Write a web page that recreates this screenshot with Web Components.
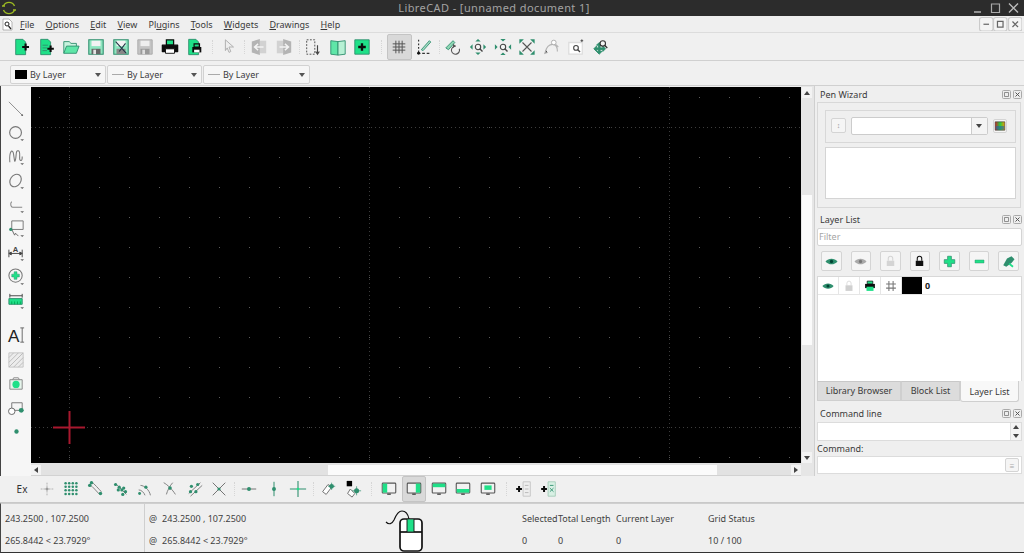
<!DOCTYPE html>
<html lang="en"><head><meta charset="utf-8"><title>LibreCAD</title>
<style>html,body{margin:0;height:100%;background:#efefef;overflow:hidden}</style></head>
<body>
<lc-app></lc-app>
<script>
const G='#1fe088',T='#2f8f6e',K='#0c0c0c',M='#8b8b8b',L='#c8c8c8';
const plus=(x,y,r=3.5,w=2.4,c=K)=>`<path d="M${x-r} ${y}h${2*r}M${x} ${y-r}v${2*r}" stroke="${c}" stroke-width="${w}" fill="none"/>`;
const arrow=`<path d="M14 17h4l-2 2z" fill="#666"/>`;
const dot=(x,y,r=1.8,c=T)=>`<circle cx="${x}" cy="${y}" r="${r}" fill="${c}"/>`;
const mon=(s)=>`<rect x="2.5" y="3.5" width="15" height="11" rx="1" fill="#f2f2f2" stroke="#555" stroke-width="1.2"/>${s}<path d="M8 15h4v1.5H8z" fill="#444"/>`;
const I={
 new:`<path d="M3 1.5h8l3 3v14H3z" fill="${G}" stroke="${T}"/>`+plus(14,10,3.8,2.4),
 tmpl:`<path d="M3 1.5h8l3 3v14H3z" fill="${G}" stroke="${T}"/><path d="M5 8h6M5 11h5M5 14h5" stroke="${T}"/>`+plus(14,12,3.6,2.3),
 open:`<path d="M2 17V4h6l2 2h6v3" fill="#c8f3de" stroke="${T}"/><path d="M2 17l3-8h14l-3 8z" fill="#5fe6a8" stroke="${T}"/>`,
 save:`<path d="M2 2h16v16H2z" fill="#8fe6c0" stroke="${T}" stroke-width="1.2"/><path d="M5 3h10v6H5z" fill="#f3f3f3"/><path d="M5 12h10v6H5z" fill="#666"/><path d="M7 13h3v5H7z" fill="#e4e4e4"/>`,
 saveas:`<path d="M2 2h16v16H2z" fill="#8fe6c0" stroke="${T}" stroke-width="1.2"/><path d="M5 3h10v6H5z" fill="#f3f3f3"/><path d="M5 12h10v6H5z" fill="#888"/><path d="M4 4l12 13M8 15l7-9" stroke="#234" stroke-width="1.2"/>`,
 savedis:`<path d="M2 2h16v16H2z" fill="#c4c4c4" stroke="#a8a8a8"/><path d="M5 3h10v6H5z" fill="#eee"/><path d="M5 12h10v6H5z" fill="#999"/><path d="M7 13h3v5H7z" fill="#ddd"/>`,
 print:`<path d="M6 2h8v6H6z" fill="${G}" stroke="${K}" stroke-width="1.4"/><path d="M1.5 8h17v7h-17z" fill="${K}" stroke="${K}" stroke-width="1.4" stroke-linejoin="round"/><path d="M5 12h10v5H5z" fill="#fff" stroke="${K}"/>`,
 prev:`<path d="M3 1.5h8l3 3v14H3z" fill="${G}" stroke="${T}"/><path d="M7 10h10v6H7z" fill="${K}"/><path d="M9 6.5h6V10H9z" fill="none" stroke="${K}" stroke-width="1.3"/><path d="M9 13h6v3H9z" fill="#fff"/>`,
 ptr:`<path d="M6 2l9 8h-5l2 5-2 1-2-5-2 3z" fill="#eee" stroke="#aaa"/>`,
 undo:`<path d="M2 4l9-3v18l-9-3z" fill="#b4b4b4"/><path d="M11 3h7v14h-7z" fill="#d2d2d2"/><path d="M15 10H5M9 6.5L5 10l4 3.5" stroke="#f4f4f4" stroke-width="1.6" fill="none"/>`,
 redo:`<path d="M2 3h7v14H2z" fill="#d2d2d2"/><path d="M9 1l9 3v12l-9 3z" fill="#b4b4b4"/><path d="M5 10h10M11 6.5l4 3.5-4 3.5" stroke="#f4f4f4" stroke-width="1.6" fill="none"/>`,
 sel:`<path d="M3 2h9v16H3z" fill="none" stroke="#444" stroke-dasharray="2 1.6"/><path d="M15 8v9M13 15l2 3 2-3" stroke="#444" stroke-width="1.3" fill="none"/>`,
 book:`<path d="M2 3l8 1v15l-8-1z" fill="#5fe6a8" stroke="${T}"/><path d="M10 4l8-1v15l-8 1z" fill="#b6f0d4" stroke="${T}"/>`,
 addblk:`<path d="M2 2h16v16H2z" fill="${G}" stroke="${T}"/>`+plus(10,10,4.2,2.6),
 grid:`<path d="M6.5 3v14M10 3v14M13.5 3v14M3 6.5h14M3 10h14M3 13.5h14" stroke="#555" stroke-width="1.1" fill="none"/>`,
 draft:`<path d="M3 17h15" stroke="#333" stroke-dasharray="3 2" stroke-width="1.3"/><path d="M4 2v15" stroke="#333" stroke-dasharray="2 2" stroke-width="1.3"/><path d="M7 13L16 3l1.5 1.5L9 14z" fill="#a6dcc4" stroke="${T}"/>${dot(4,17,1.6,'#111')}`,
 zredraw:`<path d="M2 11l8-8 2 2-7 8z" fill="#8fd6b4" stroke="${T}"/><path d="M17 12a4.5 4.5 0 1 1-4-3" fill="none" stroke="#555" stroke-width="1.2"/><path d="M10 6.5l3 2.5-3 2z" fill="#555"/>`,
 zin:`<path d="M10 1l3 3H7zM10 19l-3-3h6zM1 10l3-3v6zM19 10l-3 3V7z" fill="${T}"/><circle cx="10" cy="10" r="3" fill="#f4f4f4" stroke="#444" stroke-width="1.2"/><path d="M12 12l3 3" stroke="#444" stroke-width="1.5"/>`,
 zout:`<path d="M10 4L7 1h6zM10 16l-3 3h6zM4 10L1 7v6zM16 10l3-3v6z" fill="${T}"/><circle cx="10" cy="10" r="3" fill="#f4f4f4" stroke="#444" stroke-width="1.2"/><path d="M12 12l3 3" stroke="#444" stroke-width="1.5"/>`,
 zauto:`<path d="M5 5l10 10M15 5L5 15" stroke="#555" stroke-width="1.2"/><path d="M1.5 1.5h5l-5 5zM18.5 1.5v5l-5-5zM1.5 18.5v-5l5 5zM18.5 18.5h-5l5-5z" fill="${T}"/>`,
 zprev:`<path d="M3 16c0-6 4-9 8-9s5 4 5 8" fill="none" stroke="#b4b4b4" stroke-width="1.3"/><circle cx="12" cy="5" r="2.6" fill="#fff" stroke="#aaa"/><path d="M14 7l3 3M3 14l-1 3 3-1" stroke="#b4b4b4" stroke-width="1.2"/>`,
 zwin:`<path d="M2 5h15v13H2z" fill="#fff" stroke="#ddd" stroke-width="1.4"/><circle cx="10" cy="11" r="2.6" fill="none" stroke="#444" stroke-width="1.2"/><path d="M12 13l2.5 2.5" stroke="#444" stroke-width="1.5"/><path d="M15 3h3M16.5 1.5v3" stroke="#444"/>`,
 zpan:`<path d="M8 5l3 3H9v3h3V9l3 3-3 3v-2H9v2h2l-3 3-3-3h2v-2H5v2l-3-3 3-3v2h2V8H5z" fill="${T}" stroke="${T}"/><circle cx="12" cy="6" r="3" fill="#f4f4f4" stroke="#333" stroke-width="1.2"/><path d="M14 8l3 3" stroke="#333" stroke-width="1.5"/>`,
 line:`<path d="M2 3l14 14" stroke="#8a8a8a" stroke-width="1"/><circle cx="16" cy="17" r="1" fill="#666"/>`,
 circle:`<circle cx="9" cy="10" r="6.2" fill="none" stroke="#777" stroke-width="1.2"/>`+arrow,
 spline:`<path d="M3 16C2 4 6 1 7 8s1 9 2 5 0-10 3-9 0 9 2 10 2-2 2-4" fill="none" stroke="#777" stroke-width="1.1"/>`+arrow,
 ellipse:`<ellipse cx="9" cy="10" rx="5.5" ry="7" transform="rotate(35 9 10)" fill="none" stroke="#777" stroke-width="1.2"/>`+arrow,
 poly:`<path d="M5 7c-2 2-1 6 1 6h10" fill="none" stroke="#888" stroke-width="1.1"/>`+arrow,
 select:`<path d="M5 2h12v9H5z" fill="#f8f8f8" stroke="#777"/><path d="M5 11l3 6 1-2 3 3" stroke="#666" fill="none"/>${dot(4,11,1.7)}`+arrow,
 dim:`<path d="M2 7v8M16 7v8M2 11h14M2 11l2.5-1.5v3zM16 11l-2.5-1.5v3z" stroke="#444" fill="#444"/><text x="9" y="9" font-family="Liberation Sans" font-size="8" font-weight="700" text-anchor="middle" fill="#444">A</text>`+arrow,
 modify:`<circle cx="9" cy="9" r="7" fill="none" stroke="#777" stroke-width="1.1"/><path d="M7.500 5h3v2.500H13v3h-2.500V13h-3v-2.500H5v-3h2.500z" fill="${G}" stroke="${T}" stroke-width=".5"/>`+arrow,
 info:`<path d="M3 3v4M16 3v4M3 5h13" stroke="#444"/><path d="M2 8h14v6H2z" fill="${G}" stroke="${T}"/><path d="M5 11v3M8 11v3M11 11v3M14 11v3" stroke="#0a5"/>`+arrow,
 text:`<text x="1" y="17" font-family="Liberation Sans" font-size="18" fill="#222">A</text><path d="M16 2v15M14 2h4M14 17h4" stroke="#666"/>`,
 hatch:`<path d="M2 3h15v15H2z" fill="#ececec" stroke="#c4c4c4"/><path d="M2 8l5-5M2 13l10-10M2 18L17 3M7 18L17 8M12 18l5-5" stroke="#bbb"/>`,
 image:`<path d="M3 6h13v10H3z" fill="#e6f5ec" stroke="#888"/><circle cx="9.5" cy="11" r="3.8" fill="${G}"/><path d="M6 6l1-2h5l1 2" fill="none" stroke="#888"/>`,
 insert:`<path d="M5 5h11v8H5z" fill="none" stroke="#777"/><circle cx="5" cy="14" r="3.4" fill="#fff" stroke="#666"/>${dot(15,13,2.6)}`,
 point:dot(10,10,2.3),
 ex:'',
 sfree:`<path d="M10 3v14M3 10h14" stroke="#aaa" stroke-dasharray="2 1"/><path d="M8 10h4M10 8v4" stroke="#888"/>`,
 sgrid:[4,8,12,16].map(x=>[3,7,11,15].map(y=>dot(x,y+.5,1.4)).join('')).join(''),
 send:`<path d="M5 2c3 2 8 8 11 11M3 5c3 2 8 8 11 11" stroke="#777" fill="none"/>${dot(5,3,1.9)}${dot(15,15,1.9)}${dot(3,6,1.9)}`,
 sonent:`<path d="M4 4l12 12" stroke="#777"/>${dot(4,5,1.8)}${dot(8,8,1.8)}${dot(11,11,1.8)}${dot(7,11,1.8)}${dot(13,9,1.8)}${dot(15,13,1.8)}${dot(12,16,1.8)}`,
 scenter:`<path d="M5 6c4 0 10 5 11 11M3 11c3 0 6 3 7 6" stroke="#777" fill="none"/>${dot(11,8,1.8)}${dot(4,15,1.6)}`,
 smid:`<path d="M3 3c4 2 10 8 13 13M13 3C10 6 7 12 6 16" stroke="#777" fill="none"/>${dot(10,9,2)}`,
 sdist:`<path d="M3 15L16 3M5 18L18 6" stroke="#777"/>${dot(6,7,1.8)}${dot(13,5,1.8)}${dot(5,13,1.8)}${dot(11,13,1.8)}`,
 sint:`<path d="M3 3l14 14M17 3L3 17" stroke="#666"/>${dot(10,10,1.8)}`,
 rfree:`<path d="M2 10h16" stroke="#666"/>${dot(10,10,2.2)}`,
 rvert:`<path d="M10 2v16" stroke="${T}" stroke-width="1.1"/>${dot(10,10,2.2)}`,
 rortho:`<path d="M10 1v18M1 10h18" stroke="${T}" stroke-width="1.2"/>${dot(10,10,1.5,G)}`,
 rel:`<path d="M3 15l6-8 4 3-6 8z" fill="#fff" stroke="#666" transform="translate(1,-2)"/>${dot(14,7,2.6)}<path d="M14 3v8M10 7h8" stroke="${T}" stroke-width=".8"/>`,
 lock:`<path d="M3 1h6v6H3z" fill="#000"/><path d="M7 10l5 5-3 4-5-4z" fill="#fff" stroke="#666"/>${dot(14,12,2.8)}<path d="M14 7v10M9 12h10" stroke="${T}" stroke-width=".8"/>`,
 m1:mon(`<path d="M3 4h5v10H3z" fill="${G}"/>`),
 m2:mon(`<path d="M12 4h5v10h-5z" fill="${G}"/>`),
 m3:mon(`<path d="M3 4h14v4H3z" fill="${G}"/>`),
 m4:mon(`<path d="M3 10h14v4H3z" fill="${G}"/>`),
 m5:mon(`<path d="M6 6h8v5H6z" fill="${G}"/>`),
 ble:plus(4.5,10,3.2,2.2)+`<path d="M9 2h8v16H9z" fill="#eee" stroke="#c4c4c4"/><path d="M11 6h4M11 10h4M11 14h4" stroke="#b4b4b4"/>`,
 blr:plus(4.5,10,3.2,2.2)+`<path d="M9 2h8v16H9z" fill="#d8f0e4" stroke="#a4ccb8"/><path d="M11 6h4M11 9l4 4M15 9l-4 4" stroke="${T}"/>`,
 eye:`<path d="M2 10c4-5 12-5 16 0-4 5-12 5-16 0z" fill="${T}"/><circle cx="10" cy="10" r="2.2" fill="#043"/>`,
 eyeg:`<path d="M2 10c4-5 12-5 16 0-4 5-12 5-16 0z" fill="#aaa"/><circle cx="10" cy="10" r="2.2" fill="#777"/>`,
 lockg:`<path d="M7 9V6a3 3 0 0 1 6 0v3" fill="none" stroke="#d4d4d4" stroke-width="1.4"/><path d="M5 9h10v7H5z" fill="#d4d4d4"/>`,
 lockk:`<path d="M7 9V6a3 3 0 0 1 6 0v3" fill="none" stroke="#111" stroke-width="1.4"/><path d="M5 9h10v7H5z" fill="#111"/>`,
 lplus:`<path d="M7.5 3h5v4.5H17v5h-4.5V17h-5v-4.5H3v-5h4.5z" fill="${G}" stroke="${T}" stroke-linejoin="round"/>`,
 lminus:`<path d="M4 8h12v4H4z" fill="${G}" stroke="${T}" stroke-width=".6"/>`,
 ledit:`<path d="M3 15l5-9 6-3 4 4-4 5-7 5z" fill="${T}"/><path d="M11 13l5 4" stroke="${G}" stroke-width="2.4"/>`,
 lprint:`<path d="M6 3h8v4H6z" fill="${G}" stroke="${K}"/><path d="M3 7h14v6H3z" fill="${K}"/><path d="M5 11h10v6H5z" fill="${G}"/>`,
 lgrid:`<path d="M7 3v14M13 3v14M3 7h14M3 13h14" stroke="#777" stroke-width="1.5"/>`,
 lockl:`<path d="M7 9V6a3 3 0 0 1 6 0v3" fill="none" stroke="#ddd" stroke-width="1.4"/><path d="M5 9h10v8H5z" fill="#d0d0d0"/>`,
 colors:`<defs><linearGradient id="cg" x1="0" x2="1"><stop offset="0" stop-color="#c22"/><stop offset=".5" stop-color="#2c4"/><stop offset="1" stop-color="#e90"/></linearGradient></defs><path d="M2 3h16v14H2z" fill="url(#cg)" stroke="#333"/><path d="M3 10h14v6H3z" fill="#26a" opacity=".6"/>`
};
function def(name,css,html,init){
 customElements.define(name,class extends HTMLElement{
  connectedCallback(){ if(this.shadowRoot) return;
   const r=this.attachShadow({mode:'open'});
   r.innerHTML=`<style>${css}</style>`+(typeof html==='function'?html(this):html);
   if(init) init(this,r);
  }
 });
}
def('lc-icon',`:host{display:inline-flex;align-items:center;justify-content:center;width:var(--w,24.67px);height:var(--h,26px);box-sizing:border-box;flex:none}
 :host([active]){background:#d9d9d9;border:1px solid #c4c4c4;border-radius:2px}
 svg{display:block;width:var(--s,18px);height:var(--s,18px)}`,
 e=>`<svg viewBox="0 0 20 20" aria-hidden="true">${I[e.getAttribute('n')]||''}</svg>`);
def('lc-title',`:host{display:flex;height:16px;background:#2c2c2c;color:#a3a3a3;align-items:center;position:relative;font:11px "Noto Sans",sans-serif;letter-spacing:.4px}
 span{flex:1;text-align:center;margin-top:-1px}
 .logo{width:18px;height:16px;margin-left:0;flex:none}
 .w{display:flex;gap:3px;padding-right:3px;align-items:center}
 .w svg{width:15px;height:14px;display:block}`,
 `<svg class="logo" viewBox="0 0 18 16"><path d="M3.5 6a6 6 0 0 1 11 0M14.5 10a6 6 0 0 1-11 0" fill="none" stroke="#9dbb22" stroke-width="1.4"/><path d="M2 6h3M13 10h3" stroke="#9dbb22" stroke-width="1.4"/></svg><span>LibreCAD - [unnamed document 1]</span>
 <div class="w"><svg viewBox="0 0 15 14"><path d="M4 11h7" stroke="#aaa" stroke-width="1.6"/></svg><svg viewBox="0 0 15 14"><path d="M3.5 3h8v8.500h-8z" fill="none" stroke="#aaa" stroke-width="1.2"/></svg><svg viewBox="0 0 15 14"><path d="M3 2.500l9 9M12 2.500l-9 9" stroke="#bbb" stroke-width="1.4"/></svg></div>`);
def('lc-menubar',`:host{display:flex;height:17px;align-items:center;background:#efefef;border-bottom:1px solid #dcdcdc;box-sizing:border-box;font:9px "Noto Sans",sans-serif;color:#3a3a3a;padding-left:2px}
 .doc{width:11px;height:13px;margin-right:7px;flex:none}
 b{font-weight:400;margin-right:11.2px;white-space:nowrap}
 .end{margin-left:auto;display:flex;gap:0;padding-right:2px}
 .end svg{width:14.500px;height:14.500px;display:block}`,
 ()=>`<svg class="doc" viewBox="0 0 11 13"><path d="M1 1h6l3 3v8H1z" fill="#fff" stroke="#999" stroke-width=".7"/><circle cx="5" cy="6" r="2" fill="none" stroke="#222"/><path d="M6.5 8L9 11" stroke="#222" stroke-width="1.2"/></svg>`+
 ['<u>F</u>ile','<u>O</u>ptions','<u>E</u>dit','<u>V</u>iew','Pl<u>u</u>gins','<u>T</u>ools','<u>W</u>idgets','<u>D</u>rawings','<u>H</u>elp'].map(t=>`<b>${t}</b>`).join('')+
 `<div class="end">${['M4 6.5h5','M4 4h5v5H4z','M4 4l5 5M9 4L4 9'].map(d=>`<svg viewBox="0 0 13 13"><rect x=".5" y=".5" width="12" height="12" rx="2" fill="#f4f4f4" stroke="#cacaca"/><path d="${d}" fill="none" stroke="#666" stroke-width="1.1"/></svg>`).join('')}</div>`);
def('lc-toolbar',`:host{display:flex;align-items:center;box-sizing:border-box;height:var(--bar,28px);background:#f0f0f0;border-bottom:1px solid #d0d0d0;padding-left:var(--pad,9.7px);padding-top:var(--top,0)}
 :host([plain]){border-bottom:1px solid #c9c9c9}`,`<slot></slot>`);
def('lc-gap',`:host{display:block;flex:none;width:var(--g,5px);height:16px;position:relative}
 :host([line])::after{content:"";position:absolute;left:50%;top:1px;bottom:1px;border-left:1px dotted #d6d6d6}`,``);
def('lc-combo',`:host{display:flex;align-items:center;height:19px;box-sizing:border-box;background:#f6f6f6;border:1px solid #d2d2d2;border-radius:2px;font:9px "Noto Sans",sans-serif;color:#3c3c3c;padding-left:4px;position:relative;flex:none;margin-right:1px}
 i{display:block;flex:none;margin-right:3px}
 .a{position:absolute;right:4px;top:7px;border:3.2px solid transparent;border-top:4px solid #555;border-bottom:0}`,
 e=>`<i style="${e.hasAttribute('swatch')?'width:12px;height:9px;background:#000':'width:12px;border-top:1px solid #aaa'}"></i><span>By Layer</span><div class="a"></div>`);
def('lc-side',`:host{display:flex;flex-direction:column;align-items:center;background:#f6f6f6;border-left:1px solid #444;box-sizing:border-box;padding-top:10px}`,`<slot></slot>`);
def('lc-canvas',`:host{display:block;background:#000;overflow:hidden}svg{display:block}`,
 ()=>`<svg width="770" height="376"><defs><pattern id="d" width="30" height="30" patternUnits="userSpaceOnUse" x="8" y="10"><rect width="1" height="1" fill="#5a5a5a"/></pattern></defs>
 <rect width="770" height="376" fill="url(#d)"/>
 <path d="M38.500 0v376M338.500 0v376M638.500 0v376M0 40.500h770M0 340.500h770" stroke="#3c3c3c" stroke-dasharray="1 3"/>
 <rect x="22" y="339.500" width="32" height="2" fill="#a8182e"/><rect x="37.500" y="324" width="2" height="33" fill="#a8182e"/></svg>`);
def('lc-vscroll',`:host{display:flex;flex-direction:column;background:#e6e6e6;border-right:1px solid #cfcfcf;box-sizing:border-box;position:relative;padding:1px 2px 0 1px}
 .b{height:11px;display:flex;align-items:center;justify-content:center;flex:none;background:#f3f3f3}
 .b i{border:3px solid transparent}
 .t{flex:1;display:flex;flex-direction:column}
 .th{margin-top:97px;height:150px;background:#fbfbfb}`,
 `<div class="b"><i style="border-bottom:4px solid #444;border-top:0"></i></div><div class="t"><div class="th"></div></div><div class="b" style="margin-bottom:13px"><i style="border-top:4px solid #444;border-bottom:0"></i></div>`);
def('lc-hscroll',`:host{display:flex;align-items:center;background:#e2e2e2;height:13px;box-sizing:border-box;border-bottom:1px solid #d2d2d2;padding:2px 0 0}
 .b{width:10px;align-self:stretch;display:flex;align-items:center;justify-content:center;background:#f3f3f3;flex:none}
 .b i{border:3px solid transparent}
 .g{flex:none;width:287px}.th{flex:none;width:389px;align-self:stretch;background:#fbfbfb}.r{flex:1}`,
 `<div class="b"><i style="border-right:4px solid #444;border-left:0"></i></div><div class="g"></div><div class="th"></div><div class="r"></div><div class="b"><i style="border-left:4px solid #444;border-right:0"></i></div>`);
def('lc-dock-title',`:host{display:flex;align-items:center;height:var(--t,14px);font:9px "Noto Sans",sans-serif;color:#3a3a3a;padding-left:3px;box-sizing:border-box}
 span{flex:1}.c{display:flex;gap:2px;padding-right:0}svg{width:9px;height:9px;display:block}`,
 e=>`<span>${e.getAttribute('t')}</span><div class="c"><svg viewBox="0 0 9 9"><rect x=".5" y=".5" width="8" height="8" rx="1" fill="#eee" stroke="#aaa"/><path d="M2.500 2.500h4v4h-4z" fill="none" stroke="#777" stroke-width=".8"/></svg><svg viewBox="0 0 9 9"><rect x=".5" y=".5" width="8" height="8" rx="1" fill="#eee" stroke="#aaa"/><path d="M2.500 2.500l4 4M6.500 2.500l-4 4" stroke="#555"/></svg></div>`);
const btn=`background:#f5f5f5;border:1px solid #d4d4d4;border-radius:2px;box-sizing:border-box;display:flex;align-items:center;justify-content:center;flex:none`;
def('lc-dock',`:host{display:flex;flex-direction:column;background:#efefef;box-sizing:border-box;padding:0 2px 0 2px;font:9px "Noto Sans",sans-serif;color:#3a3a3a}
 .g{margin:0 1px 0 0;height:106px;border:1px solid #d8d8d8;box-sizing:border-box;padding:7px 4px 0 7px;margin-top:1px}
 .in{height:33px;border:1px solid #d8d8d8;box-sizing:border-box;display:flex;align-items:center;padding:0 8px 2px 5px}
 .num{${btn};width:15px;height:15px;color:#999;font-size:7px;margin-right:5px}
 .cb{flex:1;height:18px;background:#fff;border:1px solid #ccc;border-radius:2px;box-sizing:border-box;display:flex;justify-content:flex-end}
 .cb i{width:15px;border-left:1px solid #ccc;background:#f4f4f4;position:relative;display:block}
 .cb i::after{content:"";position:absolute;left:4px;top:6px;border:3px solid transparent;border-top:4px solid #444;border-bottom:0}
 .cl{${btn};width:14px;height:14px;margin-left:5px}
 .box{height:52px;margin-top:4px;background:#fff;border:1px solid #d4d4d4;box-sizing:border-box}
 .ft{height:18px;background:#fff;border:1px solid #d4d4d4;border-radius:2px;box-sizing:border-box;color:#a5a5a5;padding-left:1px;line-height:16px;margin-right:0;font-size:9px}
 .lb{display:flex;justify-content:space-between;padding:5px 3px 0 4px;height:30px;box-sizing:border-box}
 .lb div{${btn};width:20.5px;height:20px}
 .tbl{height:105px;background:#fff;border:1px solid #d8d8d8;border-bottom:0;box-sizing:border-box}
 .row{display:flex;height:18px;border-bottom:1px solid #e6e6e6;align-items:center;box-sizing:border-box}
 .row div{width:21px;height:17px;border-right:1px solid #e6e6e6;display:flex;align-items:center;justify-content:center;box-sizing:border-box;flex:none}
 .row .sw{background:#000;width:20px;border:0}
 .row b{margin-left:3px;font:700 9px "Noto Sans",sans-serif;color:#222}
 .tabs{display:flex;height:21px;align-items:flex-start}
 .tab{height:20px;background:#dcdcdc;border:1px solid #cfcfcf;border-top-color:#c8c8c8;box-sizing:border-box;text-align:center;line-height:18px}
 .tab.on{background:#f8f8f8;height:21px;border-top:0;border-radius:0 0 3px 3px;line-height:21px}
 .hr{height:4px}
 .cl2{display:flex;height:19px;background:#fff;border:1px solid #dcdcdc;box-sizing:border-box}
 .cl2 s{flex:1}.cl2 u{width:10px;display:flex;flex-direction:column;border-left:1px solid #e0e0e0;background:#f4f4f4}
 .cl2 em{flex:1;display:flex;align-items:center;justify-content:center}
 .cl2 em i{border:3px solid transparent;display:block}
 .lbl{height:15px;line-height:15px;margin-top:0}
 .ci{display:flex;height:18px;background:#fff;border:1px solid #dcdcdc;box-sizing:border-box;justify-content:flex-end;align-items:center;padding-right:2px}
 .ci i{${btn};width:14px;height:14px;color:#aaa;font-size:8px;font-style:normal}`,
 ()=>`<lc-dock-title t="Pen Wizard" style="margin-top:1px"></lc-dock-title>
 <div class="g"><div class="in"><div class="num">↕</div><div class="cb"><i></i></div><div class="cl"><lc-icon n="colors" style="--w:12px;--h:12px;--s:12px"></lc-icon></div></div><div class="box"></div></div>
 <div style="height:4px"></div>
 <lc-dock-title t="Layer List" style="--t:15px;margin-bottom:1px"></lc-dock-title>
 <div class="ft">Filter</div>
 <div class="lb">${['eye','eyeg','lockg','lockk','lplus','lminus','ledit'].map(n=>`<div><lc-icon n="${n}" style="--w:15px;--h:15px;--s:15px"></lc-icon></div>`).join('')}</div>
 <div class="tbl"><div class="row">${['eye','lockl','lprint','lgrid'].map(n=>`<div><lc-icon n="${n}" style="--w:14px;--h:14px;--s:14px"></lc-icon></div>`).join('')}<div class="sw"></div><b>0</b></div></div>
 <div class="tabs"><div class="tab" style="width:84px">Library Browser</div><div class="tab" style="width:59px">Block List</div><div class="tab on" style="width:59px">Layer List</div></div>
 <div class="hr"></div>
 <lc-dock-title t="Command line" style="--t:15px;margin-bottom:1px"></lc-dock-title>
 <div class="cl2"><s></s><u><em><i style="border-bottom:4px solid #444;border-top:0"></i></em><em><i style="border-top:4px solid #444;border-bottom:0"></i></em></u></div>
 <div class="lbl">Command:</div>
 <div class="ci"><i>≡</i></div>`);
def('lc-status',`:host{display:grid;grid-template-columns:143px 1fr;height:50px;background:#efefef;border-top:1px solid #cfcfcf;border-bottom:1px solid #333;border-left:1px solid #444;box-sizing:border-box;font:9px "Noto Sans",sans-serif;color:#3f3f3f;position:relative}
 .c{display:flex;flex-direction:column;justify-content:space-between;padding:8px 0 5px 4px;height:100%;box-sizing:border-box}
 .c2{border-left:1px solid #cfcfcf;display:flex;padding-left:4px;height:100%;box-sizing:border-box}
 .p{display:flex;flex-direction:column;justify-content:space-between;padding:8px 0 5px;box-sizing:border-box}
 .p span i{font-style:normal;margin-right:5px}
 .m{position:absolute;left:384px;top:6px}
 .col{display:flex;flex-direction:column;justify-content:space-between;padding:8px 0 5px;flex:none;box-sizing:border-box}`,
 `<div class="c"><span>243.2500 , 107.2500</span><span>265.8442 &lt; 23.7929°</span></div>
 <div class="c2"><div class="p" style="width:373px"><span><i>@</i>243.2500 , 107.2500</span><span><i>@</i>265.8442 &lt; 23.7929°</span></div>
 <div class="col" style="width:36px"><span>Selected</span><span>0</span></div>
 <div class="col" style="width:58px"><span>Total Length</span><span>0</span></div>
 <div class="col" style="width:92px"><span>Current Layer</span><span>0</span></div>
 <div class="col"><span>Grid Status</span><span>10 / 100</span></div></div>
 <svg class="m" width="38" height="43" viewBox="0 0 38 43"><path d="M1 12c3 3 6 2 8-2 2-5 4-9 8-9s6 3 7 8" fill="none" stroke="#111" stroke-width="1.2"/><rect x="15" y="9" width="22" height="32" rx="4" fill="#fff" stroke="#111" stroke-width="1.7"/><path d="M15 22h22" stroke="#111" stroke-width="1.7"/><rect x="22" y="9.500" width="7" height="12" fill="${G}"/><path d="M22 9v13M29 9v13" stroke="#111" stroke-width=".9"/></svg>`);
def('lc-app',`:host{display:flex;flex-direction:column;width:1024px;height:553px;background:#efefef;overflow:hidden}
 .main{display:grid;grid-template-columns:31px 770px 14px 209px;grid-template-rows:377px 13px;height:390px}
 lc-side{grid-row:1/3}
 .cv{padding-top:1px;grid-column:2;grid-row:1;background:#efefef}
 lc-canvas{height:376px}
 lc-hscroll{grid-column:2;grid-row:2}
 lc-vscroll{grid-column:3;grid-row:1/3}
 lc-dock{grid-column:4;grid-row:1/3}
 lc-side lc-icon{--w:24px;--h:24px;--s:19px}
 .ex{font:10px "Noto Sans",sans-serif;color:#333;width:24.67px;text-align:center;flex:none}
 .cb{--bar:25px;--pad:10px;--top:2px}`,
 ()=>{
  const t=a=>a.map(x=>typeof x==='number'?`<lc-gap style="--g:${x}px" line></lc-gap>`:`<lc-icon n="${x.replace('*','')}"${x.endsWith('*')?' active':''}></lc-icon>`).join('');
  return `<lc-title></lc-title><lc-menubar></lc-menubar>
  <lc-toolbar>${t(['new','tmpl','open','save','saveas','savedis','print','prev',10,'ptr',5.5,'undo','redo',4.4,'sel','book','addblk',12.4,'grid*','draft',4.4,'zredraw','zin','zout','zauto','zprev','zwin','zpan'])}</lc-toolbar>
  <lc-toolbar class="cb"><lc-combo swatch style="width:96px"></lc-combo><lc-combo style="width:95px"></lc-combo><lc-combo style="width:107px"></lc-combo></lc-toolbar>
  <div class="main">
   <lc-side>${['line','circle','spline','ellipse','poly','select','dim','modify','info'].map(n=>`<lc-icon n="${n}"></lc-icon>`).join('')}<div style="height:11px"></div>${['text','hatch','image','insert','point'].map(n=>`<lc-icon n="${n}"></lc-icon>`).join('')}</lc-side>
   <div class="cv"><lc-canvas></lc-canvas></div>
   <lc-vscroll></lc-vscroll>
   <lc-hscroll></lc-hscroll>
   <lc-dock></lc-dock>
  </div>
  <lc-toolbar style="--bar:27px" plain><span class="ex">Ex</span>${t(['sfree','sgrid','send','sonent','scenter','smid','sdist','sint',5,'rfree','rvert','rortho',5,'rel','lock',12,'m1','m2*','m3','m4','m5',12,'ble','blr'])}</lc-toolbar>
  <lc-status></lc-status>`;
 });
</script>
</body></html>
